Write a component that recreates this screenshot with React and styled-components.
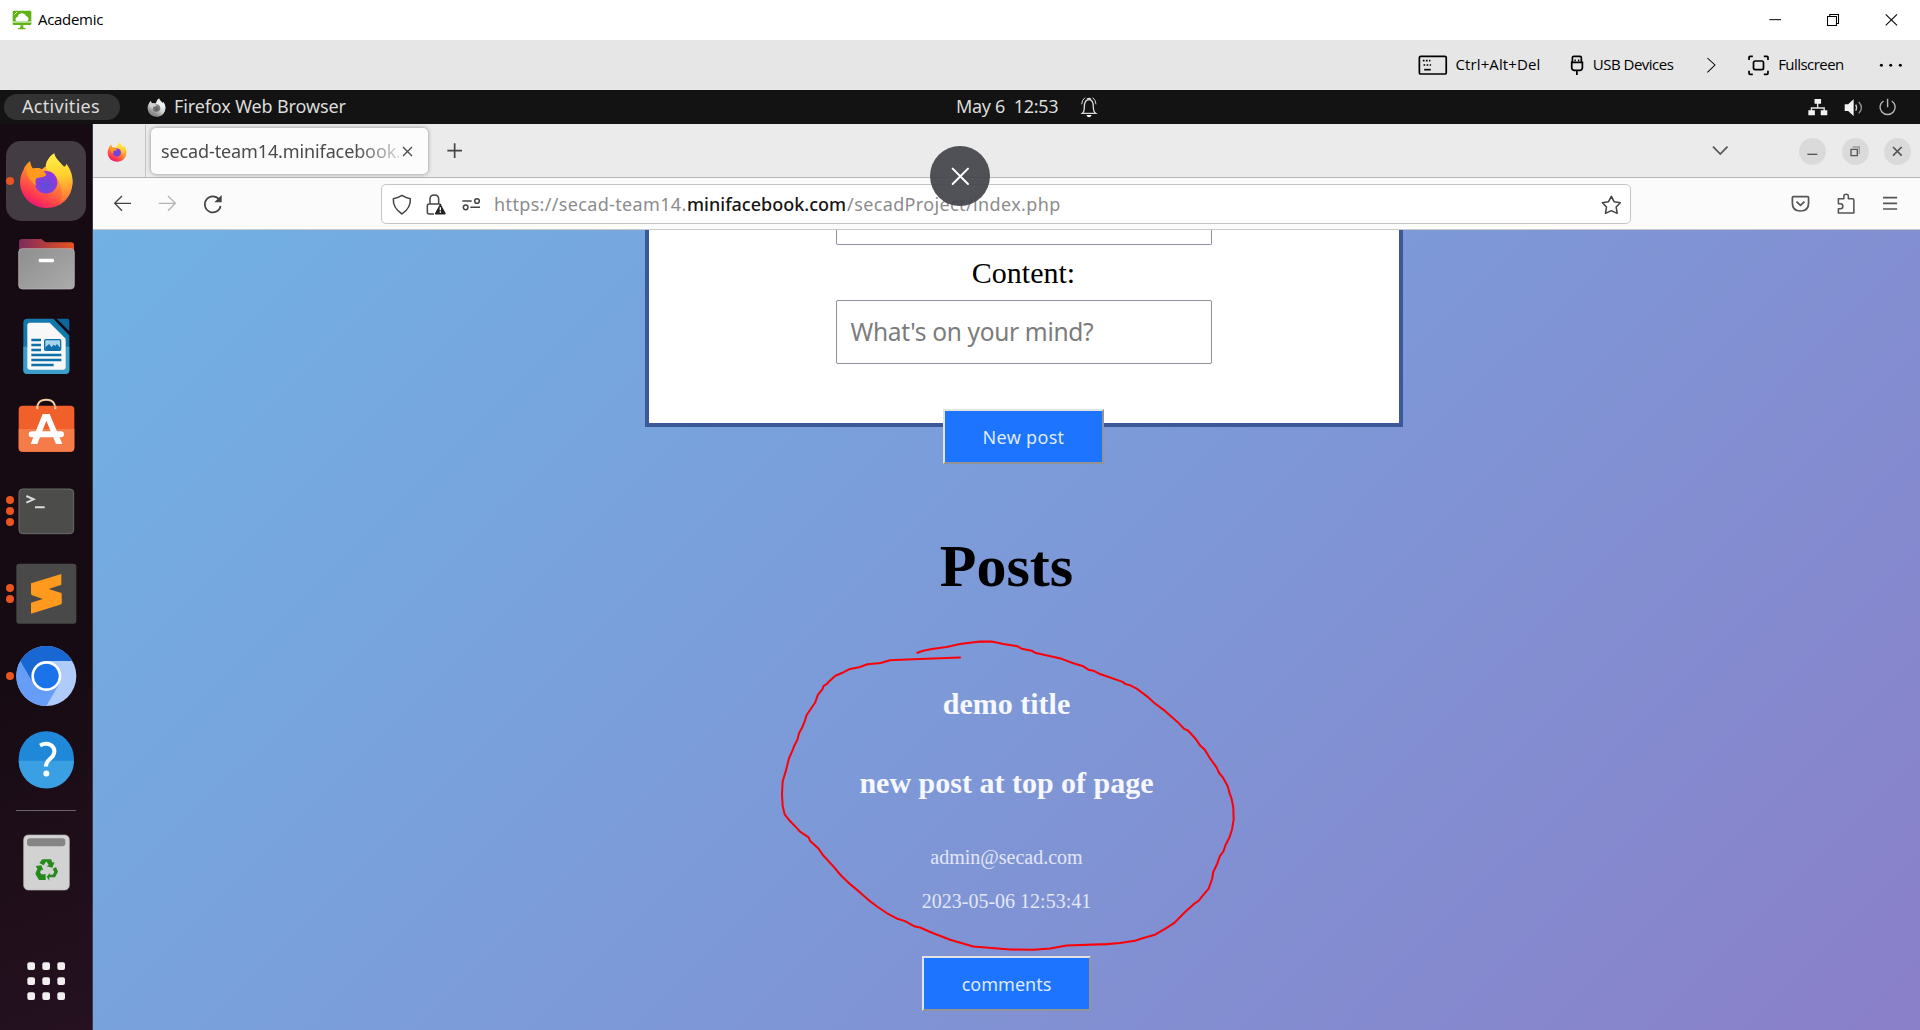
import React from "react";
import styled, { createGlobalStyle } from "styled-components";

const GlobalStyle = createGlobalStyle`
  * { box-sizing: border-box; }
  html, body { margin: 0; padding: 0; }
  body { width: 1920px; height: 1030px; overflow: hidden; background: #fff; }
`;

const UI = `"Open Sans", "Noto Sans", sans-serif`;
const UBUNTU = `"Noto Sans", "Open Sans", sans-serif`;
const SERIF = `"Liberation Serif", serif`;

const Screen = styled.div`
  position: relative;
  width: 1920px;
  height: 1030px;
  overflow: hidden;
  display: flex;
  flex-direction: column;
`;

const Bar = styled.div`
  display: flex;
  align-items: center;
  flex: none;
`;

const TitleBar = styled(Bar)`
  height: 40px;
  background: #fff;
  padding-left: 12px;
`;

const ClientToolbar = styled(Bar)`
  height: 50px;
  background: #e6e6e6;
  padding-left: 1417.5px;
`;

const SystemBar = styled(Bar)`
  height: 34px;
  background: #131313;
  padding-left: 4px;
`;

const Text = styled.span`
  display: block;
  flex: none;
  white-space: pre;
  font-family: ${(p) => p.$font || UI};
  font-size: ${(p) => p.$size}px;
  font-weight: ${(p) => p.$weight || 400};
  letter-spacing: ${(p) => p.$track || 0}px;
  color: ${(p) => p.$color || "#000"};
  width: ${(p) => (p.$w ? `${p.$w}px` : "auto")};
  margin-left: ${(p) => p.$gap || 0}px;
  line-height: 1.3;
`;

const Svg = styled.svg`
  display: block;
  flex: none;
  overflow: visible;
  margin-left: ${(p) => p.$gap || 0}px;
`;

/* Icons are drawn on a grid three times finer than their size on screen;
   wide ones are stretched a little sideways. */
const Icon = ({ box, gap, color = "#000", sw = 5, wide, children }) => {
  const [x, y, w, h] = box;
  return (
    <Svg
      $gap={gap}
      width={wide ? w / 2.904 : w / 3}
      height={h / 3}
      viewBox={`${x} ${y} ${w} ${h}`}
      preserveAspectRatio="none"
      fill="none"
      stroke={color}
      strokeWidth={sw}
    >
      {children}
    </Svg>
  );
};

const ActivitiesPill = styled.div`
  width: 116px;
  height: 26px;
  border-radius: 13px;
  background: #333;
  display: flex;
  align-items: center;
  padding-left: 18px;
  flex: none;
`;

const Desktop = styled.div`
  display: flex;
  flex: 1;
  min-height: 0;
`;

const Dock = styled.nav`
  width: 93px;
  flex: none;
  background: linear-gradient(160deg, #170b13 60%, #251120);
  border-right: 1px solid #3b3a48;
  padding: 17px 0 0 6px;
  display: flex;
  flex-direction: column;
  gap: 2.5px;
`;

const Slot = styled.div`
  position: relative;
  width: 80px;
  height: 80px;
  flex: none;
  border-radius: 15px;
  margin-top: ${(p) => p.$top || 0}px;
  background: ${(p) => (p.$active ? "#443c43" : "transparent")};
`;

const Dots = styled.div`
  position: absolute;
  left: 0;
  top: 0;
  height: 80px;
  display: flex;
  flex-direction: column;
  justify-content: center;
  gap: 3px;
`;

const Dot = styled.i`
  width: 8px;
  height: 8px;
  border-radius: 50%;
  background: #e95420;
`;

const DockRule = styled.div`
  width: 60px;
  height: 1px;
  margin: 9px 0 0 10px;
  background: #6b646a;
  flex: none;
`;

const DockItem = ({ y, dots = 0, active, top, children }) => (
  <Slot $active={active} $top={top}>
    <Svg width="80" height="80" viewBox={`18 ${y} 240 240`}>
      {children}
    </Svg>
    <Dots>
      {Array.from({ length: dots }, (_, i) => (
        <Dot key={i} />
      ))}
    </Dots>
  </Slot>
);

const Browser = styled.div`
  flex: 1;
  min-width: 0;
  display: flex;
  flex-direction: column;
`;

const TabStrip = styled(Bar)`
  height: 54px;
  padding-top: 1px;
  background: #ebebeb;
  border-bottom: 1px solid #b5b5b5;
`;

const PinnedTab = styled.div`
  width: 53px;
  height: 52px;
  padding: 17px 0 0 14px;
  border-right: 1px solid #c2c2c2;
  flex: none;
`;

const Tab = styled.div`
  width: 277px;
  height: 46px;
  margin-left: 5px;
  background: #fcfcfc;
  border-radius: 5px;
  box-shadow: 0 0 4px rgba(0, 0, 0, 0.4);
  display: flex;
  align-items: center;
  padding: 1px 0 0 10px;
  flex: none;
`;

const TabTitle = styled.div`
  width: 238px;
  mask-image: linear-gradient(to right, #000 195px, rgba(0, 0, 0, 0.2) 238px);
  flex: none;
`;

const RoundButton = styled.div`
  width: 27px;
  height: 27px;
  border-radius: 50%;
  background: #dadada;
  display: flex;
  align-items: center;
  justify-content: center;
  margin-left: ${(p) => p.$gap}px;
  flex: none;
`;

const NavBar = styled(Bar)`
  height: 52px;
  background: #fbfbfb;
  border-bottom: 1px solid #c9c9c9;
  padding-left: 20px;
`;

const UrlBox = styled.div`
  width: 1250px;
  height: 40px;
  margin-left: 159px;
  border: 1px solid #c4c4c4;
  border-radius: 5px;
  background: #fff;
  display: flex;
  align-items: center;
  padding: 2px 0 0 9px;
  flex: none;
`;

const Page = styled.main`
  flex: 1;
  min-height: 0;
  overflow: hidden;
  background: linear-gradient(135deg, #71b1e4 0%, #7d99d7 50%, #8a7fc9 100%);
  display: flex;
  flex-direction: column;
  align-items: center;
`;

const FormCard = styled.section`
  width: 758px;
  height: 197px;
  flex: none;
  margin-left: 34px;
  background: #fff;
  border: 4px solid #3b5998;
  border-top: 0;
  display: flex;
  flex-direction: column;
  align-items: center;
`;

const Field = styled.div`
  width: 376px;
  height: ${(p) => p.$h}px;
  flex: none;
  border: 1px solid #8f8f9d;
  border-top-width: ${(p) => (p.$cut ? 0 : 1)}px;
  border-radius: ${(p) => (p.$cut ? "0 0 2px 2px" : "2px")};
  display: flex;
  align-items: center;
  padding-left: 14px;
`;

const FieldLabel = styled.label`
  font: 30px/34px ${SERIF};
  color: #000;
  margin: 11px 0 10px;
`;

const PostButton = styled.button`
  width: ${(p) => p.$w}px;
  height: 55px;
  flex: none;
  padding: 0;
  margin-top: ${(p) => p.$top}px;
  margin-left: ${(p) => p.$shift || 0}px;
  border: 2px solid;
  border-color: #e3e3e3 #949494 #949494 #e3e3e3;
  background: #1d74ff;
  color: #dfeaff;
  font: 18px/24px ${UBUNTU};
  letter-spacing: ${(p) => p.$track || 0}px;
`;

const Heading = styled.h1`
  margin: 68px 0 0;
  font: bold 60px/68px ${SERIF};
  color: #000;
`;

const PostTitle = styled.h2`
  margin: ${(p) => p.$top}px 0 0;
  font: bold 30px/34px ${SERIF};
  color: #f6f8fd;
`;

const PostMeta = styled.p`
  margin: ${(p) => p.$top}px 0 0;
  font: 20px/22px ${SERIF};
  color: #e2e7f6;
`;

const CloseBubble = styled.div`
  position: absolute;
  left: 930px;
  top: 146px;
  width: 60px;
  height: 60px;
  border-radius: 50%;
  background: rgba(66, 67, 73, 0.92);
  display: flex;
  align-items: center;
  justify-content: center;
`;

const Scribble = styled.svg`
  position: absolute;
  left: 760px;
  top: 500px;
  pointer-events: none;
`;

const FirefoxLogo = ({ id, gray }) => {
  const c = gray
    ? ["#f4f4f4", "#c6c6c6", "#8d8d8d", "#e8e8e8", "#5d5d5d", "#8a8a8a", "#d0d0d0"]
    : ["#ffd02f", "#ff7139", "#e5127c", "#fff04a", "#5b4fd6", "#9a35e0", "#ff9a1f"];
  return (
    <>
      <defs>
        <linearGradient id={`${id}b`} x1="0.85" y1="0.15" x2="0.3" y2="1">
          <stop offset="0" stopColor={c[0]} />
          <stop offset="0.5" stopColor={c[1]} />
          <stop offset="0.8" stopColor={gray ? c[2] : "#ff3750"} />
          <stop offset="1" stopColor={c[2]} />
        </linearGradient>
        <linearGradient id={`${id}f`} x1="0.5" y1="0" x2="0.6" y2="1">
          <stop offset="0" stopColor={c[3]} />
          <stop offset="0.45" stopColor={c[0]} />
          <stop offset="1" stopColor={c[1]} />
        </linearGradient>
        <radialGradient id={`${id}g`} cx="0.5" cy="0.65" r="0.6">
          <stop offset="0" stopColor={c[4]} />
          <stop offset="1" stopColor={c[5]} />
        </radialGradient>
      </defs>
      <path
        fill={`url(#${id}b)`}
        d="M90 124C91 134 94 141 99 146C108 143 118 144 126 148C136 136 160 132 180 140L212 158C222 188 217 216 200 237C184 256 162 264 139 264C108 264 78 246 66 216C56 190 60 166 71 149C72 143 78 132 90 124Z"
      />
      <path
        fill={`url(#${id}f)`}
        d="M163 100C166 116 180 126 190 138C196 142 198 136 199 131C208 143 218 160 218 186C216 216 198 238 180 247C194 226 184 190 168 170C158 150 138 158 137 140C138 122 150 108 163 100Z"
      />
      <circle cx="138" cy="187" r="34" fill={`url(#${id}g)`} />
      <path
        fill={c[6]}
        d="M90 124C91 134 94 141 99 146C108 143 118 144 124 148C130 154 137 159 139 164C134 172 122 170 112 174C104 178 106 188 109 198C98 190 90 178 82 168C78 150 80 134 90 124Z"
      />
    </>
  );
};

const Star = () => (
  <path
    strokeLinejoin="round"
    d="M672 586L680 602L698 605L686 618L689 637L672 629L655 637L658 618L646 605L664 602Z"
  />
);

export default function App() {
  return (
    <Screen>
      <GlobalStyle />
      <TitleBar>
        <Icon box={[36, 30, 60, 60]}>
          <g stroke="none">
            <rect x="38" y="32" width="56" height="43" rx="4" fill="#5fb314" />
            <path fill="#fff" d="M52 64C44 62 45 53 53 51C54 38 74 36 78 48C87 50 88 61 81 64Z" />
            <path stroke="#fff" strokeWidth="3" d="M43 44L51 36M38 66H94" />
            <path fill="#5fb314" d="M61 76H70V83L77 85V88H54V85L61 83Z" />
          </g>
        </Icon>
        <Text $size={15} $gap={6} $w={1722} $track={-0.3}>Academic</Text>
        <Icon wide box={[1129, 45, 36, 36]} gap={9} sw={3}>
          <path d="M1130 62H1164" />
        </Icon>
        <Icon wide box={[1298, 45, 36, 36]} gap={45.8} sw={3}>
          <path d="M1299.500 52.500H1325.500V79.500H1299.500ZM1306 52V46.500H1331.500V73.500H1326" />
        </Icon>
        <Icon wide box={[1465, 45, 36, 36]} gap={45.1} sw={3}>
          <path d="M1467 46L1500 79M1500 46L1467 79" />
        </Icon>
      </TitleBar>

      <ClientToolbar>
        <Icon wide box={[108, 164, 84, 60]}>
          <rect x="112" y="168" width="78" height="53" rx="4" />
          <path strokeDasharray="5 4" d="M122 181H144M124 194H146" />
          <path d="M126 208H145" />
        </Icon>
        <Text $size={15} $gap={9.1} $w={102} $track={0.1}>Ctrl+Alt+Del</Text>
        <Icon wide box={[550, 164, 40, 60]} gap={12}>
          <path d="M557 186V172Q557 168 561 168H579Q583 168 583 172V186M555 186H586V202Q586 208 579 210H562Q555 208 555 202ZM570 210V224" />
          <path d="M563 180H567M573 180H577" />
        </Icon>
        <Text $size={15} $gap={9.500} $w={98} $track={-0.5}>USB Devices</Text>
        <Icon wide box={[948, 172, 30, 48]} gap={15.700} sw={3}>
          <path d="M952 175L974 196L952 218" />
        </Icon>
        <Icon wide box={[1070, 164, 60, 62]} gap={31.700}>
          <path d="M1073 179V171Q1073 168 1076 168H1084M1116 168H1125Q1128 168 1128 171V179M1128 211V219Q1128 222 1125 222H1116M1084 222H1076Q1073 222 1073 219V211" />
          <rect x="1086" y="182" width="29" height="26" rx="5" />
        </Icon>
        <Text $size={15} $gap={9} $w={84} $track={-0.55}>Fullscreen</Text>
        <Icon wide box={[1448, 190, 70, 20]} gap={16.500}>
          <g fill="#000" stroke="none">
            <circle cx="1455" cy="200" r="4.500" />
            <circle cx="1482" cy="200" r="4.500" />
            <circle cx="1510" cy="200" r="4.500" />
          </g>
        </Icon>
      </ClientToolbar>

      <SystemBar>
        <ActivitiesPill>
          <Text $font={UBUNTU} $size={18} $track={0.3} $color="#dcdcdc">Activities</Text>
        </ActivitiesPill>
        <Svg $gap={27} width="19" height="19" viewBox="56 98 166 168">
          <FirefoxLogo id="gray" gray />
        </Svg>
        <Text $font={UBUNTU} $size={18} $track={-0.12} $gap={8} $w={782} $color="#dcdcdc">Firefox Web Browser</Text>
        <Text $font={UBUNTU} $size={18} $track={-0.3} $w={124} $color="#dcdcdc">{"May 6  12:53"}</Text>
        <Icon box={[720, 15, 54, 66]} color="#d8d8d8" sw={4}>
          <path d="M727 67Q733 62 733 48Q733 26 747 26Q760 26 760 48Q760 62 767 67ZM741 25Q747 19 753 25" />
          <path strokeWidth="3" d="M725 40Q726 26 735 20M768 40Q767 26 758 20" />
          <path stroke="none" fill="#fff" d="M739 72H755Q752 79 747 79Q742 79 739 72Z" />
        </Icon>
        <Icon wide box={[1244, 290, 58, 56]} gap={710.4} color="#e6e6e6" sw={4}>
          <path d="M1272 304V320M1254 332V320H1291V332" />
          <path stroke="none" fill="#f2f2f2" d="M1263 293H1282V307H1263ZM1245 327H1264V342H1245ZM1281 327H1300V342H1281Z" />
        </Icon>
        <Icon wide box={[1348, 290, 56, 56]} gap={15.800} color="#cfcfcf" sw={4}>
          <path stroke="none" fill="#f2f2f2" d="M1350 309H1360L1376 294V344L1360 329H1350Z" />
          <path d="M1382 310Q1387 319 1382 328" />
          <path stroke="#8f8f8f" d="M1391 302Q1406 319 1391 336" />
        </Icon>
        <Icon wide box={[1450, 290, 54, 56]} gap={15.800} color="#b9b9b9" sw={4}>
          <path d="M1463 299A22 22 0 1 0 1487 299M1475 292V318" />
        </Icon>
      </SystemBar>

      <Desktop>
        <Dock>
          <DockItem y={63} dots={1} active>
            <FirefoxLogo id="dock" />
          </DockItem>
          <DockItem y={312}>
            <defs>
              <linearGradient id="tab"><stop stopColor="#7d2a5c" /><stop offset="1" stopColor="#e95420" /></linearGradient>
              <linearGradient id="fold" x2="1" y2="1"><stop stopColor="#8e8e8e" /><stop offset="1" stopColor="#ababab" /></linearGradient>
            </defs>
            <path fill="url(#tab)" d="M57 420V366Q57 357 66 357H122Q126 357 129 361Q134 367 140 367H213Q222 367 222 376V420Z" />
            <rect x="56" y="386" width="167" height="121" rx="11" fill="url(#fold)" stroke="#bdbdbd" strokeWidth="2" />
            <rect x="116" y="416" width="46" height="11" rx="4" fill="#fff" />
          </DockItem>
          <DockItem y={558}>
            <path fill="#1378ac" d="M82 596H162L208 642V750Q208 762 196 762H82Q70 762 70 750V608Q70 596 82 596Z" />
            <path fill="#3c9ecb" d="M70 680H208V750Q208 762 196 762H82Q70 762 70 750Z" />
            <path fill="#190c14" d="M158 594L210 648V632L172 594Z" />
            <path fill="#f8f8f8" d="M90 608H149L197 656V741Q197 749 189 749H90Q82 749 82 741V616Q82 608 90 608Z" />
            <path fill="#0e659c" d="M170 596H202Q208 596 208 602V634Z" />
            <path stroke="#0f6fa8" strokeWidth="7" d="M94 660H123M94 675H123M94 690H123M94 705H184M94 720H184M94 735H161" />
            <rect x="134" y="659" width="48" height="32" rx="3" fill="#a6d3ec" stroke="#0f6fa8" strokeWidth="4" />
            <path fill="#0f6fa8" d="M136 690V682L147 672L155 682L161 674L166 678L171 672L181 684V690Z" />
          </DockItem>
          <DockItem y={807}>
            <path fill="none" stroke="#f2cfa0" strokeWidth="6" d="M112 872Q109 839 139 839Q168 839 165 872" />
            <rect x="56" y="857" width="167" height="138" rx="12" fill="#f1602b" />
            <path fill="#f57b49" d="M56 927H223V983Q223 995 211 995H68Q56 995 56 983Z" />
            <path fill="none" stroke="#f2cfa0" strokeWidth="6" d="M112 858V868M166 858V868" />
            <path fill="#fff" d="M128 882H149L187 972H168L139 902L112 972H92Z" />
            <rect x="86" y="934" width="106" height="18" rx="9" fill="#fff" />
          </DockItem>
          <DockItem y={33} dots={3}>
            <rect x="57" y="87" width="164" height="134" rx="11" fill="#4c4c4b" stroke="#6a6a69" strokeWidth="3" />
            <path fill="none" stroke="#dadada" strokeWidth="6" d="M79 108L101 118L79 128M105 142H134" />
          </DockItem>
          <DockItem y={282} dots={2}>
            <rect x="49" y="311" width="180" height="180" rx="9" fill="#494949" />
            <path fill="#e8860f" d="M93 404L122 408L184 412V433L150 425Z" />
            <path fill="#ff9a1e" d="M93 370L184 342V374L146 387L184 399Q185 400 185 404V430Q184 433 180 434L93 461V428L131 416L96 405Q93 404 93 400Z" />
          </DockItem>
          <DockItem y={528} dots={1}>
            <circle cx="139" cy="648" r="90" fill="#aecbfa" />
            <path fill="#669df6" d="M139 648L61 603A90 90 0 0 0 139 738L178 671Z" />
            <path fill="#1967d2" d="M139 648L100 670L61 603A90 90 0 0 1 217 603H139Z" />
            <circle cx="139" cy="648" r="45" fill="#fff" />
            <circle cx="139" cy="648" r="37" fill="#1a73e8" />
          </DockItem>
          <DockItem y={-62.5}>
            <circle cx="139" cy="57" r="83" fill="#1f88d8" />
            <path fill="#3ba0e3" d="M56 63H222A83 83 0 0 1 56 63Z" />
            <path fill="none" stroke="#fff" strokeWidth="12" d="M120 17Q137 8 151 15Q164 22 163 36Q162 48 150 57Q138 66 138 80" />
            <circle cx="139" cy="101" r="9" fill="#fff" />
          </DockItem>
          <DockRule />
          <DockItem y={249} top={9.5}>
            <rect x="71" y="285" width="137" height="165" rx="14" fill="#d2d2d2" stroke="#b5b5b5" strokeWidth="2" />
            <rect x="81" y="295" width="115" height="24" rx="9" fill="#858585" />
            <g fill="#26891c">
              <path d="M127 358H153L158 368L164 366L157 383L140 379L146 375L139 364L131 376L118 369Z" />
              <path d="M158 384L168 378L174 392L165 409H148V419L140 407L150 396V401H158L163 393Z" transform="translate(0 3)" />
              <path d="M107 378L124 376L130 391L124 389L120 397L124 403H137V420H117L106 401L112 386Z" />
            </g>
          </DockItem>
          <DockItem y={603} top={35.5}>
            <g fill="#f1efef">
              {[667, 712, 757].map((y) =>
                [82, 127, 172].map((x) => (
                  <rect key={`${x}-${y}`} x={x} y={y} width="23" height="23" rx="6" />
                ))
              )}
            </g>
          </DockItem>
        </Dock>

        <Browser>
          <TabStrip>
            <PinnedTab>
              <Svg width="20" height="20" viewBox="56 98 166 168">
                <FirefoxLogo id="pin" />
              </Svg>
            </PinnedTab>
            <Tab>
              <TabTitle>
                <Text $font={UBUNTU} $size={18} $track={-0.12} $color="#4a4a4a">secad-team14.minifacebook.</Text>
              </TabTitle>
              <Icon box={[1206, 438, 32, 32]} gap={3} color="#4c4c4c" sw={4}>
                <path d="M1209 441L1236 468M1236 441L1209 468" />
              </Icon>
            </Tab>
            <Icon box={[1340, 434, 46, 46]} gap={18.7} color="#444">
              <path d="M1363 435V479M1341 457H1385" />
            </Icon>
            <Icon wide box={[963, 436, 48, 34]} gap={1249.5} color="#555">
              <path d="M966 441L987 463L1008 441" />
            </Icon>
            <RoundButton $gap={71}>
              <Icon box={[1240, 438, 32, 32]} color="#555" sw={4}>
                <path d="M1241 463H1271" />
              </Icon>
            </RoundButton>
            <RoundButton $gap={15.500}>
              <Icon box={[1364, 438, 30, 32]} color="#555" sw={4}>
                <path d="M1367 448H1386V467H1367Z" />
                <path stroke="#999" d="M1372 441H1392V462" />
              </Icon>
            </RoundButton>
            <RoundButton $gap={15.500}>
              <Icon box={[1487, 438, 32, 32]} color="#555">
                <path d="M1490 441L1516 467M1516 441L1490 467" />
              </Icon>
            </RoundButton>
          </TabStrip>

          <NavBar>
            <Icon box={[339, 586, 56, 56]} gap={0} color="#444" sw={4}>
              <path d="M393 614H344M366 592L344 614L366 636" />
            </Icon>
            <Icon box={[474, 586, 56, 56]} gap={26.300} color="#b4b4b4" sw={4}>
              <path d="M476 614H526M504 592L526 614L504 636" />
            </Icon>
            <Icon box={[609, 586, 58, 58]} gap={26.300} color="#444" sw={5}>
              <path d="M657 602A24 24 0 1 0 662 622" />
              <path fill="#444" stroke="none" d="M665 589V611H643Z" />
            </Icon>
            <UrlBox>
              <Icon box={[64, 310, 60, 64]} gap={0.5} color="#444" sw={4.500}>
                <path strokeLinejoin="round" d="M94 314Q104 321 119 324Q121 352 94 370Q66 352 68 324Q83 321 94 314Z" />
              </Icon>
              <Icon box={[166, 310, 60, 64]} gap={14} color="#444" sw={4.500}>
                <path d="M190 370H176Q170 370 170 364V346Q170 340 176 340H206Q209 340 211 344M178 340V325Q178 313 191 313Q204 313 204 325V340" />
                <path fill="#222" stroke="#222" strokeLinejoin="round" d="M209 343L223 369H195Z" />
                <path stroke="#fff" strokeWidth="4" d="M209 350V359M209 362V366" />
              </Icon>
              <Icon box={[276, 320, 56, 44]} gap={16.700} color="#444" sw={4.500}>
                <path d="M277 332H305M301 351H330" />
                <circle cx="321" cy="332" r="7" />
                <circle cx="287" cy="351" r="7" />
              </Icon>
              <Text $font={UBUNTU} $size={18} $gap={13} $w={193} $track={0.34} $color="#8c8c8c">https://secad-team14.</Text>
              <Text $font={UBUNTU} $size={18} $weight={500} $w={160} $color="#161616">minifacebook.com</Text>
              <Text $font={UBUNTU} $size={18} $w={753} $track={0.37} $color="#8c8c8c">/secadProject/index.php</Text>
              <Icon wide box={[642, 582, 60, 60]} gap={0.5} color="#444" sw={4.500}>
                <Star />
              </Icon>
            </UrlBox>
            <Icon wide box={[1192, 586, 56, 52]} gap={159.5} color="#555">
              <path strokeLinejoin="round" d="M1199 591H1240Q1243 591 1243 594V611Q1243 634 1219.500 634Q1196 634 1196 611V594Q1196 591 1199 591Z" />
              <path d="M1208 606L1219.500 617L1231 606" />
            </Icon>
            <Icon wide box={[1326, 580, 54, 64]} gap={26.900} color="#555" sw={4.500}>
              <path strokeLinejoin="round" d="M1330 597H1346V590Q1346 584 1352.500 584Q1359 584 1359 590V597H1371Q1375 597 1375 601V640H1330V627H1336Q1343 627 1343 619.500Q1343 612 1336 612H1330Z" />
            </Icon>
            <Icon wide box={[1458, 588, 46, 44]} gap={26.900} color="#555">
              <path d="M1461 593H1502M1461 610H1502M1461 627H1502" />
            </Icon>
          </NavBar>

          <Page>
            <FormCard>
              <Field $h={15} $cut />
              <FieldLabel>Content:</FieldLabel>
              <Field $h={64}>
                <Text $font={UBUNTU} $size={24.5} $track={-0.32} $color="#7c7c7c">What's on your mind?</Text>
              </Field>
            </FormCard>
            <PostButton $w={161} $top={-18} $shift={34} $track={0.3}>New post</PostButton>
            <Heading>Posts</Heading>
            <PostTitle $top={87}>demo title</PostTitle>
            <PostTitle $top={45}>new post at top of page</PostTitle>
            <PostMeta $top={46}>admin@secad.com</PostMeta>
            <PostMeta $top={22}>2023-05-06 12:53:41</PostMeta>
            <PostButton $w={169} $top={44}>comments</PostButton>
          </Page>
        </Browser>
      </Desktop>

      <CloseBubble>
        <Icon box={[332, 230, 56, 56]} color="#fff" sw={6}>
          <path strokeLinecap="round" d="M337 235L383 281M383 235L337 281" />
        </Icon>
      </CloseBubble>
      <Scribble width="500" height="460" viewBox="0 0 1500 1361" preserveAspectRatio="none">
        <path
          fill="none"
          stroke="#fb0007"
          strokeWidth="6"
          strokeLinejoin="round"
          strokeLinecap="round"
          d="M472 452L490 446L515 441L560 435L600 426L660 419L695 419L730 426L773 433L785 440L815 446L828 453L905 470L940 483L970 492L985 502L1000 505L1020 515L1088 538L1095 544L1110 548L1130 558L1165 584L1185 602L1215 624L1254 658L1272 677L1284 682L1308 708L1322 728L1333 737L1350 764L1370 792L1377 807L1390 823L1403 846L1408 865L1415 885L1420 910L1421 945L1416 975L1409 997L1397 1020L1390 1040L1380 1053L1370 1080L1360 1100L1356 1122L1346 1150L1325 1174L1317 1185L1302 1195L1276 1218L1242 1252L1215 1269L1185 1286L1150 1296L1125 1304L1080 1311L1040 1314L920 1318L870 1327L820 1331L750 1330L640 1321L570 1301L555 1295L520 1282L480 1265L465 1262L435 1246L410 1238L380 1222L350 1202L325 1183L300 1161L265 1132L243 1111L220 1084L190 1052L175 1031L150 1008L146 998L120 981L110 970L90 950L74 930L68 905L66 870L68 832L78 800L87 764L99 738L103 726L112 710L117 690L126 674L134 655L140 636L165 600L174 576L187 560L191 550L200 545L207 537L226 520L248 511L267 501L300 494L322 486L362 482L390 474L440 472L540 468L600 466"
        />
      </Scribble>
    </Screen>
  );
}
